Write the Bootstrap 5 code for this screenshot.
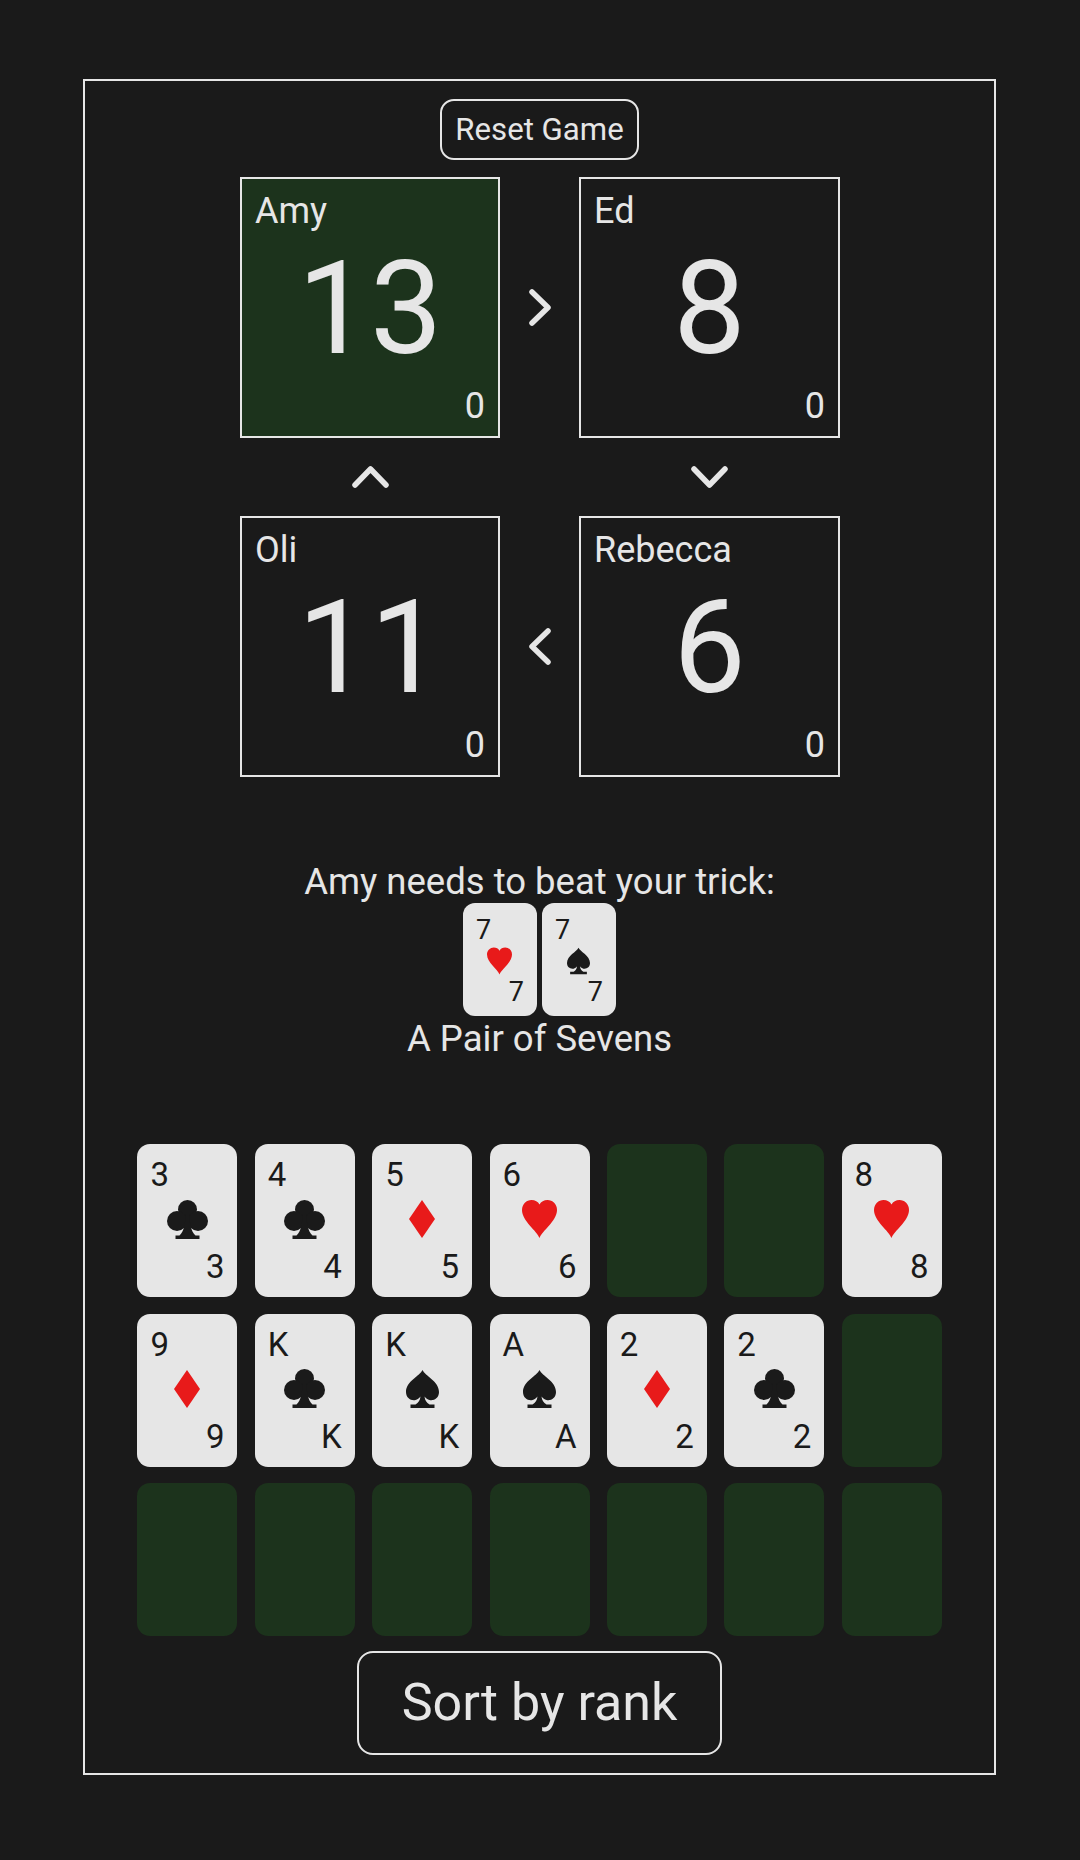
<!doctype html>
<html lang="en">
<head>
<meta charset="utf-8">
<title>Big Two</title>
<link href="https://cdn.jsdelivr.net/npm/bootstrap@5.3.0/dist/css/bootstrap.min.css" rel="stylesheet">
<style>
html,body{background:#1a1a1a;}
body{font-family:Roboto,"Liberation Sans",sans-serif;font-weight:400;color:#e6e6e6;height:1860px;padding:79px 84px 0 83px;}
.game-frame{border:2px solid #e6e6e6;height:1696px;padding-top:18px;}
.ghost-btn{--bs-btn-color:#e6e6e6;--bs-btn-border-color:#e6e6e6;--bs-btn-hover-color:#e6e6e6;--bs-btn-hover-border-color:#e6e6e6;--bs-btn-border-width:2px;background:transparent;font-family:inherit;}
.reset-btn{width:199px;height:61px;font-size:31.2px;border-radius:14px;padding:0;line-height:1;}
.sort-btn{width:365px;height:104px;font-size:52px;border-radius:16px;padding:0;line-height:1;margin-top:14.6px;}
.table-grid{display:grid;grid-template-columns:260px 79px 261px;grid-template-rows:261px 78px 261px;justify-content:center;margin-top:17px;padding-left:1px;align-self:stretch;}
.seat{border:2px solid #e6e6e6;display:grid;padding:10px 13px 8px 13px;}
.seat>*{grid-area:1/1;}
.seat-active{background:#1c331c;}
.seat-name{font-size:36px;line-height:44px;justify-self:start;align-self:start;}
.seat-count{font-size:129px;line-height:1;justify-self:center;align-self:center;}
.seat-score{font-size:36px;line-height:44px;justify-self:end;align-self:end;}
.chev{display:block;fill:none;stroke:#e6e6e6;stroke-width:5.5;stroke-linecap:round;stroke-linejoin:round;place-self:center;}
.trick-panel{margin-top:82px;text-align:center;font-size:36.5px;line-height:44px;}
.trick-line{height:44px;line-height:46px;}
.trick-cards{display:flex;justify-content:center;gap:5px;margin:0;}
.pc{background:#e6e6e6;color:#1a1a1a;display:grid;}
.pc>*{grid-area:1/1;}
.pc-sm{width:74px;height:113px;border-radius:12px;font-size:27px;padding:9px 13px 6px 13px;line-height:36px;}
.pc-lg{height:153px;border-radius:13px;font-size:33px;padding:9px 13px 8px 13px;line-height:44px;}
.rank-top{justify-self:start;align-self:start;}
.rank-bot{justify-self:end;align-self:end;}
.pip{place-self:center;display:block;}
.pc-lg .pip{margin-bottom:4px;}
.is-red{fill:#e81a1a;}
.is-black{fill:#1a1a1a;}
.hand-grid{display:grid;grid-template-columns:repeat(7,100px);column-gap:17.36px;row-gap:16.7px;justify-content:center;margin-top:84px;}
.slot-empty{height:153px;border-radius:13px;background:#1c331c;}
</style>
</head>
<body>
<svg width="0" height="0" class="position-absolute">
<defs>
<symbol id="s-heart" viewBox="0 0 35 38"><path d="M17.5 38C15 31 0 21 0 10 0 4 4.500 0 9.500 0c3.500 0 6.500 1.500 8 4.500C19 1.500 22 0 25.500 0 30.500 0 35 4 35 10 35 21 20 31 17.500 38Z"/></symbol>
<symbol id="s-diamond" viewBox="0 0 26 38"><path d="M13 0 26 19 13 38 0 19Z"/></symbol>
<symbol id="s-spade" viewBox="0 0 33 38"><path d="M16.500 0C19 6 33 11 33 22c0 6-5 9-9.500 8-2-.5-3.500-1.500-5-3.500.5 4 2 6 5 8H28.500V38H4.500V34.500H9.500c3-2 4.500-4 5-8-1.500 2-3 3-5 3.500C5 31 0 28 0 22 0 11 14 6 16.500 0Z"/></symbol>
<symbol id="s-club" viewBox="0 0 41 39"><circle cx="20.500" cy="9.500" r="9.500"/><circle cx="10" cy="21" r="10"/><circle cx="31" cy="21" r="10"/><path d="M18.500 14h4c0 10 1.500 17 6 21.500H32.500V39H8.500V35.500H12.500C17 31 18.500 24 18.500 14Z"/></symbol>
</defs>
</svg>
<main class="game-frame d-flex flex-column align-items-center">
  <button class="btn ghost-btn reset-btn" type="button">Reset Game</button>
  <section class="table-grid">
    <div class="seat seat-active"><div class="seat-name">Amy</div><div class="seat-count">13</div><div class="seat-score">0</div></div>
    <svg class="chev" width="26" height="41" viewBox="0 0 26 41"><path d="M5 5 21 20.500 5 36"/></svg>
    <div class="seat"><div class="seat-name">Ed</div><div class="seat-count">8</div><div class="seat-score">0</div></div>
    <svg class="chev" width="41" height="26" viewBox="0 0 41 26"><path d="M5 21 20.500 5 36 21"/></svg>
    <div></div>
    <svg class="chev" width="41" height="26" viewBox="0 0 41 26"><path d="M5 5 20.500 21 36 5"/></svg>
    <div class="seat"><div class="seat-name">Oli</div><div class="seat-count">11</div><div class="seat-score">0</div></div>
    <svg class="chev" width="26" height="41" viewBox="0 0 26 41"><path d="M21 5 5 20.500 21 36"/></svg>
    <div class="seat"><div class="seat-name">Rebecca</div><div class="seat-count">6</div><div class="seat-score">0</div></div>
  </section>
  <section class="trick-panel">
    <div class="trick-line">Amy needs to beat your trick:</div>
    <div class="trick-cards">
      <div class="pc pc-sm"><span class="rank-top">7</span><svg class="pip is-red" width="25" height="28"><use href="#s-heart"/></svg><span class="rank-bot">7</span></div>
      <div class="pc pc-sm"><span class="rank-top">7</span><svg class="pip is-black" width="23" height="28"><use href="#s-spade"/></svg><span class="rank-bot">7</span></div>
    </div>
    <div class="trick-line">A Pair of Sevens</div>
  </section>
  <section class="hand-grid">
    <div class="pc pc-lg"><span class="rank-top">3</span><svg class="pip is-black" width="41" height="39"><use href="#s-club"/></svg><span class="rank-bot">3</span></div>
    <div class="pc pc-lg"><span class="rank-top">4</span><svg class="pip is-black" width="41" height="39"><use href="#s-club"/></svg><span class="rank-bot">4</span></div>
    <div class="pc pc-lg"><span class="rank-top">5</span><svg class="pip is-red" width="26" height="38"><use href="#s-diamond"/></svg><span class="rank-bot">5</span></div>
    <div class="pc pc-lg"><span class="rank-top">6</span><svg class="pip is-red" width="35" height="38"><use href="#s-heart"/></svg><span class="rank-bot">6</span></div>
    <div class="slot-empty"></div>
    <div class="slot-empty"></div>
    <div class="pc pc-lg"><span class="rank-top">8</span><svg class="pip is-red" width="35" height="38"><use href="#s-heart"/></svg><span class="rank-bot">8</span></div>
    <div class="pc pc-lg"><span class="rank-top">9</span><svg class="pip is-red" width="26" height="38"><use href="#s-diamond"/></svg><span class="rank-bot">9</span></div>
    <div class="pc pc-lg"><span class="rank-top">K</span><svg class="pip is-black" width="41" height="39"><use href="#s-club"/></svg><span class="rank-bot">K</span></div>
    <div class="pc pc-lg"><span class="rank-top">K</span><svg class="pip is-black" width="33" height="38"><use href="#s-spade"/></svg><span class="rank-bot">K</span></div>
    <div class="pc pc-lg"><span class="rank-top">A</span><svg class="pip is-black" width="33" height="38"><use href="#s-spade"/></svg><span class="rank-bot">A</span></div>
    <div class="pc pc-lg"><span class="rank-top">2</span><svg class="pip is-red" width="26" height="38"><use href="#s-diamond"/></svg><span class="rank-bot">2</span></div>
    <div class="pc pc-lg"><span class="rank-top">2</span><svg class="pip is-black" width="41" height="39"><use href="#s-club"/></svg><span class="rank-bot">2</span></div>
    <div class="slot-empty"></div>
    <div class="slot-empty"></div><div class="slot-empty"></div><div class="slot-empty"></div><div class="slot-empty"></div><div class="slot-empty"></div><div class="slot-empty"></div><div class="slot-empty"></div>
  </section>
  <button class="btn ghost-btn sort-btn" type="button">Sort by rank</button>
</main>
<script src="https://cdn.jsdelivr.net/npm/bootstrap@5.3.0/dist/js/bootstrap.bundle.min.js"></script>
</body>
</html>
